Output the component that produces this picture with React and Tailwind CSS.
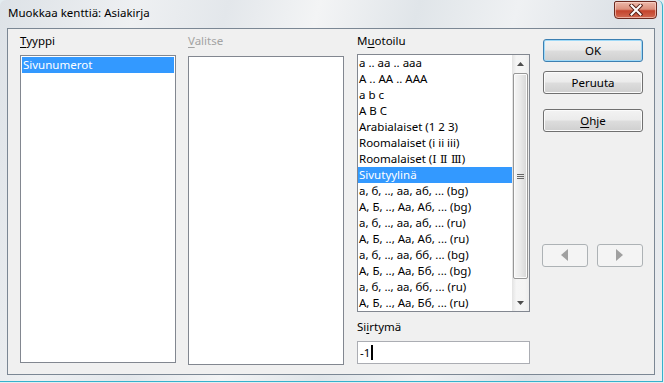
import React from "react";

const items = [
  "a .. aa .. aaa",
  "A .. AA .. AAA",
  "a b c",
  "A B C",
  "Arabialaiset (1 2 3)",
  "Roomalaiset (i ii iii)",
  "ROMAN",
  "Sivutyylinä",
  "а, б, .., аа, аб, ... (bg)",
  "А, Б, .., Аа, Аб, ... (bg)",
  "а, б, .., аа, аб, ... (ru)",
  "А, Б, .., Аа, Аб, ... (ru)",
  "а, б, .., аа, бб, ... (bg)",
  "А, Б, .., Аа, Бб, ... (bg)",
  "а, б, .., аа, бб, ... (ru)",
  "А, Б, .., Аа, Бб, ... (ru)",
];

function Btn({ children, def }) {
  return (
    <div
      className={
        "h-[23px] w-[100px] rounded-[3px] border flex items-center justify-center " +
        (def
          ? "border-[#3c7fb1] shadow-[inset_0_0_0_1px_#9fd9f7]"
          : "border-[#707070] shadow-[inset_0_0_0_1px_#fbfbfb]") +
        " bg-[linear-gradient(180deg,#f3f3f3_0%,#ebebeb_48%,#dddddd_52%,#cfcfcf_100%)]"
      }
    >
      <span className="leading-[16px]">{children}</span>
    </div>
  );
}

function ArrowBtn({ dir }) {
  return (
    <div className="h-[23px] w-[46px] rounded-[3px] border border-[#adb2b5] bg-[#f4f4f4] flex items-center justify-center">
      <svg width="8" height="13" viewBox="0 0 8 13">
        {dir === "left" ? (
          <polygon points="7,0 7,12 0,6" fill="#a0a0a0" />
        ) : (
          <polygon points="0,0 0,12 7,6" fill="#a0a0a0" />
        )}
      </svg>
    </div>
  );
}

export default function App() {
  return (
    <div className="w-[664px] h-[383px] bg-[#e3ecf0] font-['Noto_Sans',sans-serif] text-[11.5px] text-black overflow-hidden">
      <div className="w-[663px] h-[382px] flex flex-col border-r border-b border-[#36b1cc] rounded-tl-[6px] rounded-tr-[6px] bg-[linear-gradient(105deg,#dde2e7_0%,#eef0f2_18%,#e3e7eb_30%,#f3f4f5_42%,#e0e5e9_55%,#eff1f3_68%,#dde2e7_82%,#eceef1_100%)]">
        {/* title bar */}
        <div className="h-[28px] flex items-start pl-[8px] pr-[5px]">
          <div className="pt-[5px] leading-[16px] text-[11.5px] text-black">Muokkaa kenttiä: Asiakirja</div>
          <div className="ml-auto mt-[1px] w-[43px] h-[18px] rounded-b-[4px] rounded-t-[2px] border border-[#6b2a20] bg-[linear-gradient(180deg,#ecb8a9_0%,#dc907c_45%,#c4432c_55%,#d16a52_100%)] shadow-[inset_0_0_0_1px_rgba(255,220,210,0.6)] flex items-center justify-center">
            <svg width="14" height="12" viewBox="0 0 14 12">
              <path d="M2.5 1.5 L11.5 10.5 M11.5 1.5 L2.5 10.5" stroke="#5a231a" strokeWidth="4" strokeLinecap="square" />
              <path d="M2.5 1.5 L11.5 10.5 M11.5 1.5 L2.5 10.5" stroke="#ffffff" strokeWidth="2" strokeLinecap="square" />
            </svg>
          </div>
        </div>
        {/* client */}
        <div className="mx-[7px] h-[347px] border border-[#7b8794] bg-[#f0f0f0] flex pl-[12px]">
          {/* Tyyppi */}
          <div className="w-[156px] pt-[4px] flex flex-col">
            <div className="h-[16px] leading-[16px]">
              <span className="underline underline-offset-2">T</span>yyppi
            </div>
            <div className="mt-[6px] h-[308px] border border-[#828790] bg-white p-[1px]">
              <div className="h-[16px] leading-[16px] bg-[#3399ff] text-white px-[1px]">Sivunumerot</div>
            </div>
          </div>
          {/* Valitse */}
          <div className="ml-[12px] w-[156px] pt-[4px] flex flex-col">
            <div className="h-[16px] leading-[16px] text-[#a3a3a3]">
              <span className="underline underline-offset-2">V</span>alitse
            </div>
            <div className="mt-[7px] h-[309px] border border-[#828790] bg-white"></div>
          </div>
          {/* Muotoilu */}
          <div className="ml-[13px] w-[173px] pt-[4px] flex flex-col">
            <div className="h-[16px] leading-[16px]">
              M<span className="underline underline-offset-2">u</span>otoilu
            </div>
            <div className="mt-[5px] h-[258px] border border-[#828790] bg-white flex overflow-hidden">
              <div className="flex-1 overflow-hidden">
                {items.map((t, i) => (
                  <div
                    key={i}
                    className={
                      "h-[16px] leading-[16px] px-[1px] whitespace-nowrap " +
                      (i === 7 ? "bg-[#3399ff] text-white" : "")
                    }
                  >
                    {t === "ROMAN" ? (
                      <>
                        Roomalaiset (<span className="font-['DejaVu_Serif',serif] text-[11px]">Ⅰ Ⅱ Ⅲ</span>)
                      </>
                    ) : (
                      t
                    )}
                  </div>
                ))}
              </div>
              <div className="w-[17px] flex flex-col bg-[linear-gradient(90deg,#e3e3e3_0%,#f5f5f5_25%,#f4f4f4_75%,#ededed_100%)]">
                <div className="h-[17px] flex items-center justify-center">
                  <svg width="7" height="4" viewBox="0 0 7 4">
                    <polygon points="0,4 7,4 3.5,0" fill="#4d4d4d" />
                  </svg>
                </div>
                <div className="mt-[1px] mx-[1px] h-[206px] rounded-[2px] border border-[#979797] bg-[linear-gradient(90deg,#f6f6f6_0%,#e9e9e9_50%,#d6d6d6_100%)] shadow-[inset_0_0_0_1px_#fbfbfb] flex flex-col items-center justify-center gap-[1px]">
                  <div className="w-[7px] h-[1px] bg-[#666]"></div>
                  <div className="w-[7px] h-[1px] bg-[#666]"></div>
                  <div className="w-[7px] h-[1px] bg-[#666]"></div>
                </div>
                <div className="mt-auto h-[17px] flex items-center justify-center">
                  <svg width="7" height="4" viewBox="0 0 7 4">
                    <polygon points="0,0 7,0 3.5,4" fill="#4d4d4d" />
                  </svg>
                </div>
              </div>
            </div>
            <div className="mt-[7px] h-[16px] leading-[16px]">
              Si<span className="underline underline-offset-2">i</span>rtymä
            </div>
            <div className="mt-[6px] h-[23px] border border-[#abadb3] bg-white flex items-center pl-[2px]">
              <span className="leading-[16px]">-1</span>
              <span className="ml-[1px] w-[2px] h-[15px] bg-black"></span>
            </div>
          </div>
          {/* Buttons */}
          <div className="ml-[13px] w-[100px] pt-[10px] flex flex-col">
            <Btn def>OK</Btn>
            <div className="mt-[9px]">
              <Btn>Peruuta</Btn>
            </div>
            <div className="mt-[15px]">
              <Btn>
                <span className="underline underline-offset-2">O</span>hje
              </Btn>
            </div>
            <div className="mt-[112px] -ml-[1px] flex gap-[9px]">
              <ArrowBtn dir="left" />
              <ArrowBtn dir="right" />
            </div>
          </div>
        </div>
      </div>
    </div>
  );
}
